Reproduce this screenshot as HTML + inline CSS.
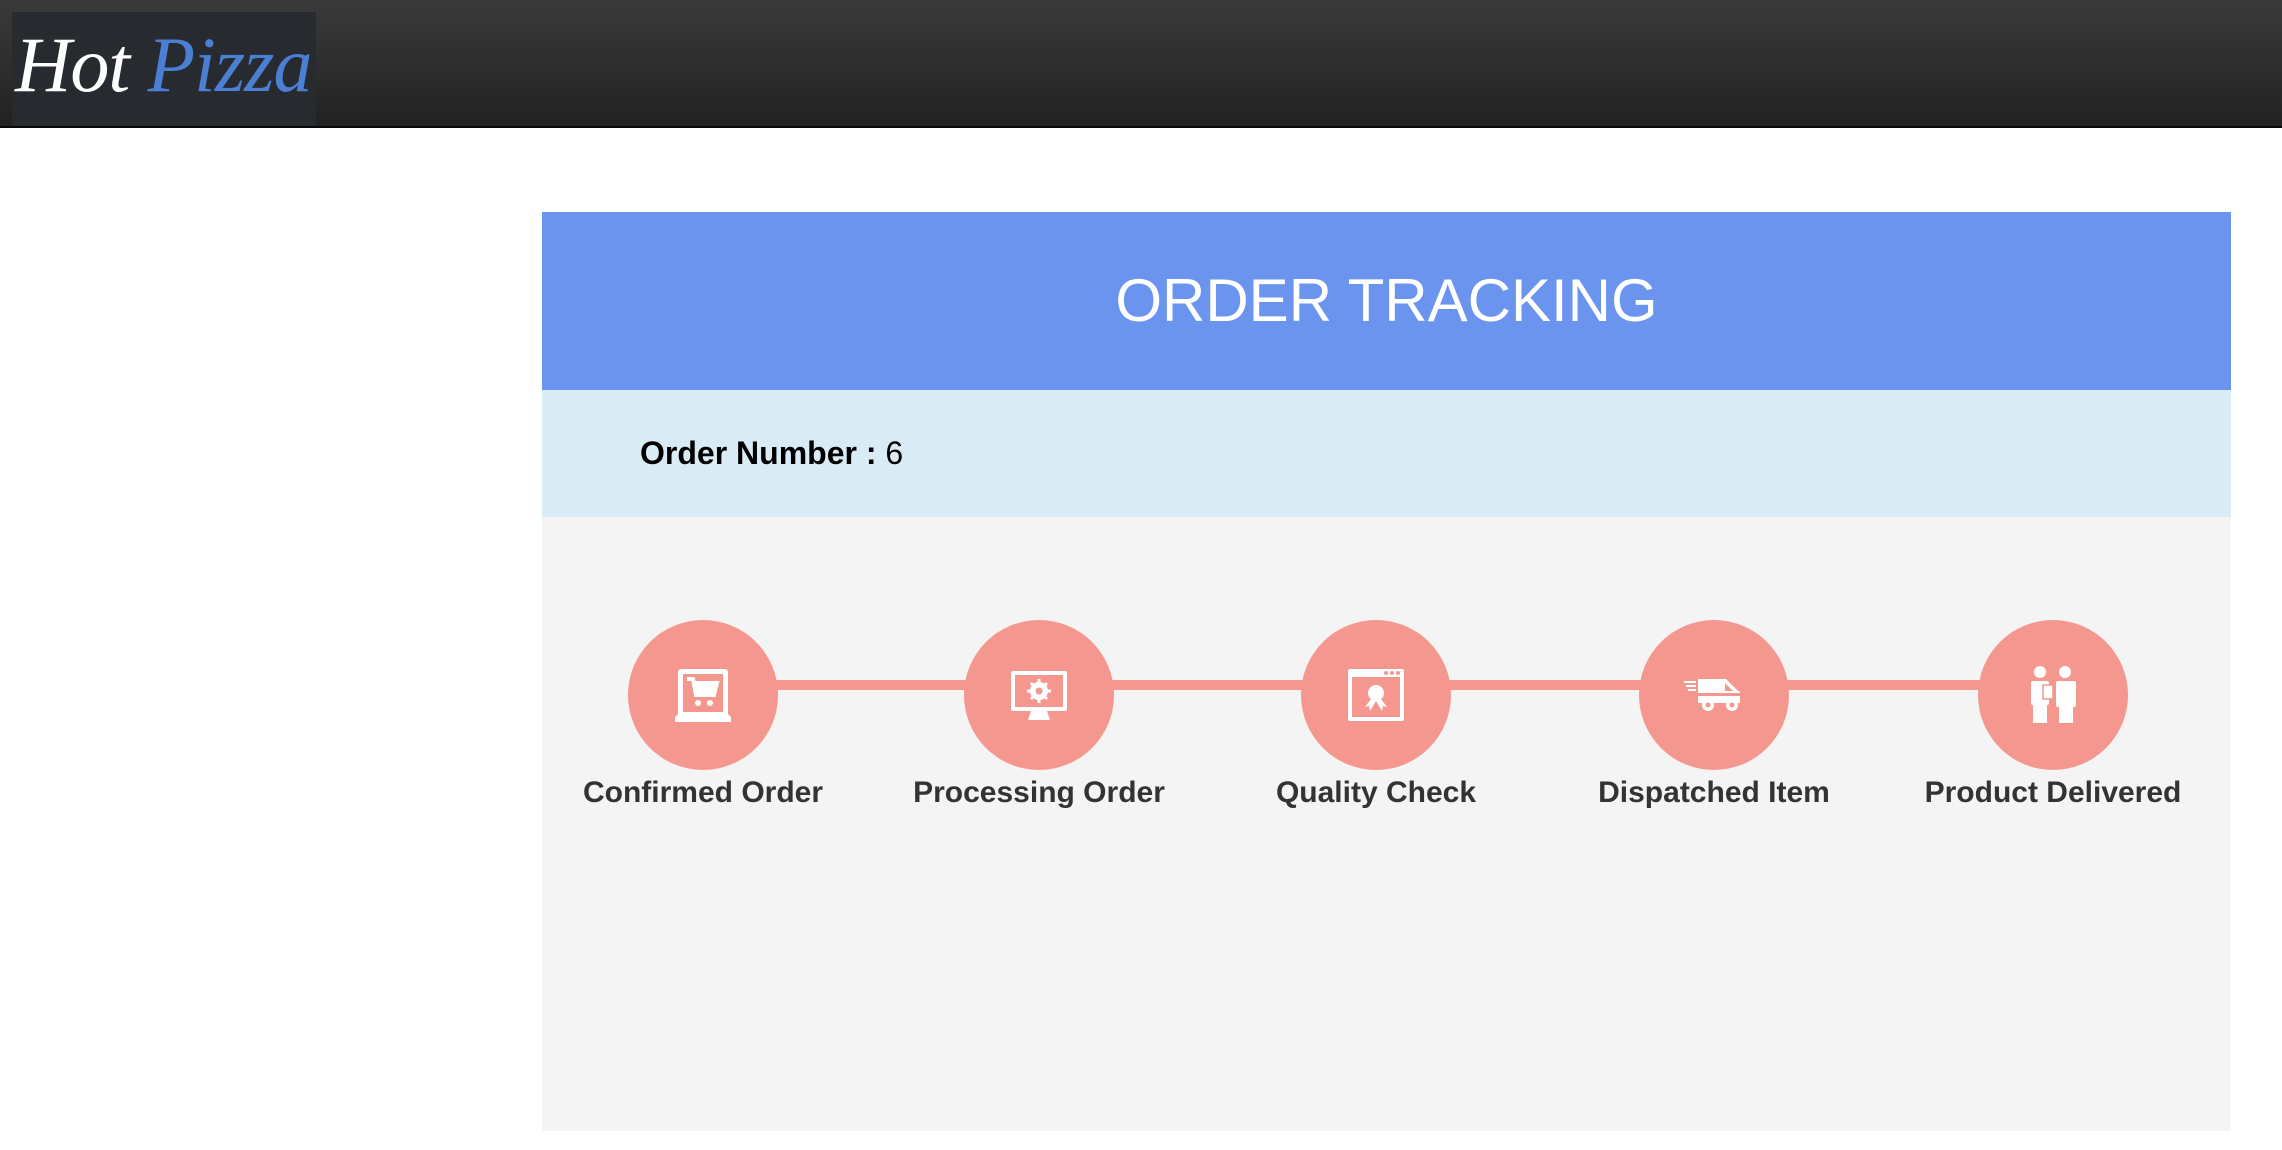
<!DOCTYPE html>
<html><head><meta charset="utf-8"><style>
*{margin:0;padding:0;box-sizing:border-box}
html,body{width:2282px;height:1150px;background:#fff;overflow:hidden;font-family:"Liberation Sans",Arial,sans-serif}
.nav{position:absolute;left:0;top:0;width:2282px;height:128px;background:linear-gradient(#3a3a3a,#222);border-bottom:2px solid #080808}
.logo{position:absolute;left:12px;top:12px;width:304px;height:114px;background:#272a2e}
.logo span{position:absolute;left:3px;top:8px;font-family:"Liberation Serif",serif;font-style:italic;font-size:78px;color:#fff;white-space:nowrap;letter-spacing:-1px}
.logo b{font-weight:normal;color:#4a7fd4}
.panel{position:absolute;left:542px;top:212px;width:1689px;height:919px;background:#f4f4f4}
.hdr{height:178px;background:#6b94ef;color:#fff;font-size:60px;text-align:center;line-height:178px;padding-left:0}
.ord{height:127px;background:#d9ecf5;font-size:32px;padding-left:98px;line-height:127px;color:#000}
.line{position:absolute;left:161px;top:468px;width:1350px;height:10px;background:#f4978e}
.c{position:absolute;top:408px;width:150px;height:150px;border-radius:50%;background:#f4978e}
.c svg{position:absolute;left:45px;top:45px;width:60px;height:60px}
.l{position:absolute;top:564px;width:320px;text-align:center;font-size:30px;font-weight:bold;color:#333}
</style></head><body>
<div class="nav"><div class="logo"><span>Hot <b>Pizza</b></span></div></div>
<div class="panel">
<div class="hdr">ORDER TRACKING</div>
<div class="ord"><b>Order Number :</b> 6</div>
<div class="line"></div>
<div class="c" style="left:86px"><svg viewBox="0 0 60 60"><path d="M8 4h44a3 3 0 0 1 3 3v42l3 3v5H2v-5l3-3V7a3 3 0 0 1 3-3z" fill="#fff"/><rect x="10" y="9" width="40" height="38" fill="#f4978e"/><path d="M14 14h6l3 16h18l3-12H22" fill="none" stroke="#fff" stroke-width="4"/><rect x="22" y="16" width="20" height="14" fill="#fff"/><circle cx="25" cy="38" r="3" fill="#fff"/><circle cx="37" cy="38" r="3" fill="#fff"/></svg></div>
<div class="c" style="left:422px"><svg viewBox="0 0 60 60"><rect x="2" y="6" width="56" height="40" rx="2" fill="#fff"/><rect x="6" y="10" width="48" height="32" fill="#f4978e"/><path d="M22 46h16l3 9H19z" fill="#fff"/><circle cx="30" cy="26" r="9" fill="#fff"/><circle cx="30" cy="26" r="4" fill="#f4978e"/><path d="M30 14v24M18 26h24M22 18l16 16M38 18L22 34" stroke="#fff" stroke-width="3"/><circle cx="30" cy="26" r="3.5" fill="#f4978e"/></svg></div>
<div class="c" style="left:759px"><svg viewBox="0 0 60 60"><rect x="2" y="4" width="56" height="52" rx="2" fill="#fff"/><rect x="6" y="12" width="48" height="40" fill="#f4978e"/><circle cx="40" cy="8" r="2" fill="#f4978e"/><circle cx="46" cy="8" r="2" fill="#f4978e"/><circle cx="52" cy="8" r="2" fill="#f4978e"/><circle cx="30" cy="28" r="8" fill="#fff"/><path d="M25 34l-6 8 4-1 1 5 6-10M35 34l6 8-4-1-1 5-6-10" fill="#fff"/></svg></div>
<div class="c" style="left:1097px"><svg viewBox="0 0 60 60"><path d="M14 14h28l10 10 4 3v11H14z" fill="#fff"/><path d="M41 18l8 8h-8z" fill="#f4978e"/><rect x="14" y="28" width="42" height="3" fill="#f4978e"/><circle cx="24" cy="40" r="6" fill="#fff"/><circle cx="24" cy="40" r="2.5" fill="#f4978e"/><circle cx="48" cy="40" r="6" fill="#fff"/><circle cx="48" cy="40" r="2.5" fill="#f4978e"/><path d="M0 17h12M2 21h10M4 25h8" stroke="#fff" stroke-width="2"/></svg></div>
<div class="c" style="left:1436px"><svg viewBox="0 0 60 60"><circle cx="17" cy="7" r="6" fill="#fff"/><circle cx="42" cy="7" r="6" fill="#fff"/><rect x="8" y="16" width="18" height="24" rx="2" fill="#fff"/><rect x="10" y="38" width="14" height="20" fill="#fff"/><rect x="20" y="20" width="10" height="14" fill="#fff" stroke="#f4978e" stroke-width="1.5"/><rect x="33" y="16" width="20" height="26" rx="2" fill="#fff"/><rect x="36" y="40" width="14" height="18" fill="#fff"/></svg></div>
<div class="l" style="left:1px">Confirmed Order</div>
<div class="l" style="left:337px">Processing Order</div>
<div class="l" style="left:674px">Quality Check</div>
<div class="l" style="left:1012px">Dispatched Item</div>
<div class="l" style="left:1351px">Product Delivered</div>
</div>
</body></html>
